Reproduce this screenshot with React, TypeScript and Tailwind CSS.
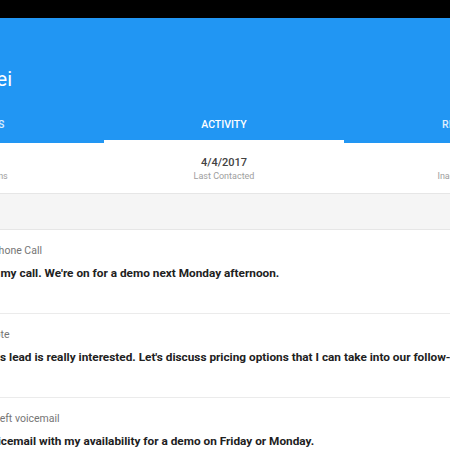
import React from 'react'
import clsx from 'clsx'

const tabs = [
    { label: 'DETAILS', active: false },
    { label: 'ACTIVITY', active: true },
    { label: 'RELATED', active: false },
]

const stats = [
    { value: '12', label: 'Interactions' },
    { value: '4/4/2017', label: 'Last Contacted' },
    { value: '3', label: 'Inactive Days' },
]

// offsets keep the visible part of each line where the screenshot crops it
const activities = [
    {
        type: 'Phone Call',
        typeOffset: '-ml-[8px]',
        text: "Returned my call. We're on for a demo next Monday afternoon.",
        textOffset: '-ml-[51px]',
    },
    {
        type: 'Note',
        typeOffset: '-ml-[13px]',
        text: "This lead is really interested. Let's discuss pricing options that I can take into our follow-up.",
        textOffset: '-ml-[17px]',
    },
    {
        type: 'Left voicemail',
        typeOffset: '-ml-[6px]',
        text: 'Left a voicemail with my availability for a demo on Friday or Monday.',
        textOffset: '-ml-[48px]',
    },
]

const App = () => {
    return (
        <div className="h-[450px] w-[450px] overflow-hidden bg-white font-['Roboto',sans-serif]">
            <div className="h-[18px] bg-black"></div>

            <div className="bg-[#2196f3] pt-[47px]">
                <div className="flex h-[28px] w-[12px] justify-end">
                    <h1 className="whitespace-nowrap text-[20px] leading-[28px] font-normal text-white">Jason Wei</h1>
                </div>
                <div className="-ml-[136px] mt-[14px] flex h-[36px] w-[720px]">
                    {tabs.map((tab) => (
                        <div
                            key={tab.label}
                            className={clsx(
                                'flex flex-1 items-center justify-center border-b-[3px] pt-[3px] text-[10.5px] font-medium',
                                tab.active ? 'border-white text-white' : 'border-transparent text-white/85'
                            )}
                        >
                            {tab.label}
                        </div>
                    ))}
                </div>
            </div>

            <div className="-ml-[136px] flex w-[720px] border-b border-[#e6e6e6] pt-[13px] pb-[11px]">
                {stats.map((stat) => (
                    <div key={stat.label} className="flex flex-1 flex-col items-center">
                        <span className="text-[11px] leading-[14px] font-medium text-[#424242]">{stat.value}</span>
                        <span className="text-[9px] leading-[12px] text-[#9e9e9e]">{stat.label}</span>
                    </div>
                ))}
            </div>

            <div className="h-[36px] border-b border-[#e6e6e6] bg-[#f5f5f5]"></div>

            {activities.map((item) => (
                <div key={item.type} className="border-b border-[#ebebeb] pt-[14px] pb-[32px] whitespace-nowrap">
                    <p className={clsx('text-[10.5px] leading-[14px] text-[#757575]', item.typeOffset)}>{item.type}</p>
                    <p className={clsx('mt-[7px] text-[11.8px] leading-[16px] font-bold text-[#212121]', item.textOffset)}>{item.text}</p>
                </div>
            ))}
        </div>
    )
}

export default App
